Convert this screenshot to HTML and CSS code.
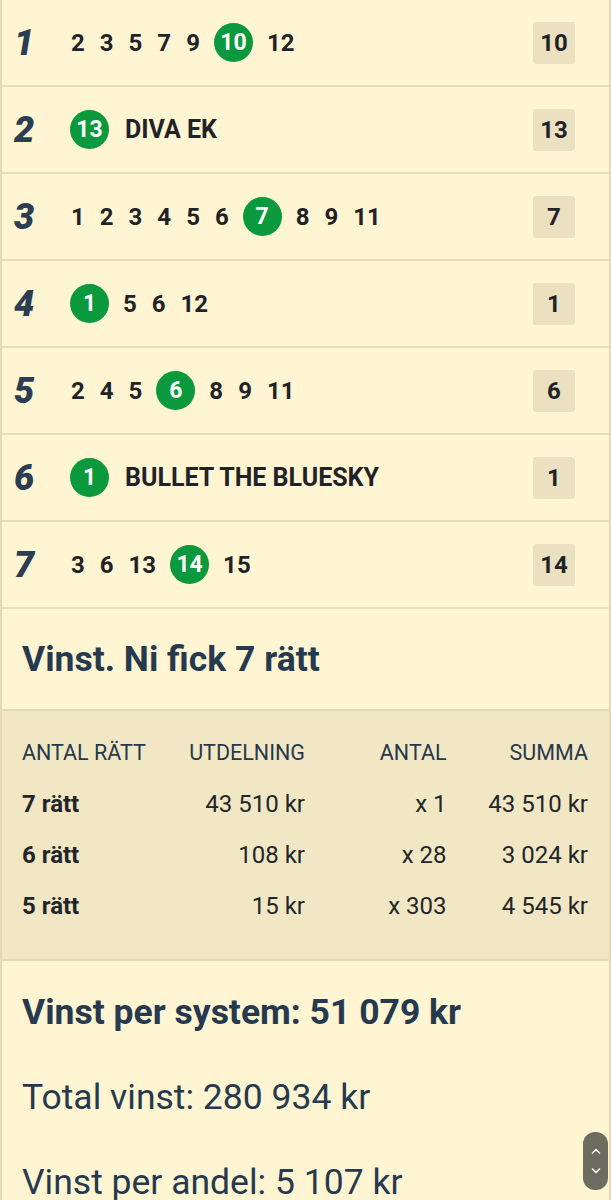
FILE: index.html
```html
<!DOCTYPE html>
<html lang="sv">
<head>
<meta charset="utf-8">
<link rel="stylesheet" href="styles.css">
</head>
<body>
<div class="panel">
  <div class="leg">
    <div class="leg-no">1</div>
    <div class="picks"><span>2</span><span>3</span><span>5</span><span>7</span><span>9</span><span class="win">10</span><span>12</span></div>
    <div class="res">10</div>
  </div>
  <div class="leg">
    <div class="leg-no">2</div>
    <div class="picks"><span class="win">13</span><span class="name">DIVA EK</span></div>
    <div class="res">13</div>
  </div>
  <div class="leg">
    <div class="leg-no">3</div>
    <div class="picks"><span>1</span><span>2</span><span>3</span><span>4</span><span>5</span><span>6</span><span class="win">7</span><span>8</span><span>9</span><span>11</span></div>
    <div class="res">7</div>
  </div>
  <div class="leg">
    <div class="leg-no">4</div>
    <div class="picks"><span class="win">1</span><span>5</span><span>6</span><span>12</span></div>
    <div class="res">1</div>
  </div>
  <div class="leg">
    <div class="leg-no">5</div>
    <div class="picks"><span>2</span><span>4</span><span>5</span><span class="win">6</span><span>8</span><span>9</span><span>11</span></div>
    <div class="res">6</div>
  </div>
  <div class="leg">
    <div class="leg-no">6</div>
    <div class="picks"><span class="win">1</span><span class="name">BULLET THE BLUESKY</span></div>
    <div class="res">1</div>
  </div>
  <div class="leg">
    <div class="leg-no">7</div>
    <div class="picks"><span>3</span><span>6</span><span>13</span><span class="win">14</span><span>15</span></div>
    <div class="res">14</div>
  </div>

  <div class="result-head">Vinst. Ni fick 7 rätt</div>

  <div class="payout">
    <div class="th left">ANTAL RÄTT</div>
    <div class="th">UTDELNING</div>
    <div class="th">ANTAL</div>
    <div class="th">SUMMA</div>

    <div class="td left strong">7 rätt</div>
    <div class="td">43 510 kr</div>
    <div class="td">x 1</div>
    <div class="td">43 510 kr</div>

    <div class="td left strong">6 rätt</div>
    <div class="td">108 kr</div>
    <div class="td">x 28</div>
    <div class="td">3 024 kr</div>

    <div class="td left strong">5 rätt</div>
    <div class="td">15 kr</div>
    <div class="td">x 303</div>
    <div class="td">4 545 kr</div>
  </div>

  <div class="totals">
    <p class="bold">Vinst per system: 51 079 kr</p>
    <p>Total vinst: 280 934 kr</p>
    <p>Vinst per andel: 5 107 kr</p>
  </div>
</div>

<div class="scroller">
  <svg width="12" height="8" viewBox="0 0 12 8"><path d="M2.5 6 L6 2.5 L9.5 6" fill="none" stroke="#fff" stroke-width="1.5" stroke-linecap="round" stroke-linejoin="round"/></svg>
  <svg width="12" height="8" viewBox="0 0 12 8"><path d="M2.5 2 L6 5.5 L9.5 2" fill="none" stroke="#fff" stroke-width="1.5" stroke-linecap="round" stroke-linejoin="round"/></svg>
</div>
</body>
</html>
```

FILE: styles.css
```css
* { box-sizing: border-box; }

html, body {
  margin: 0;
  padding: 0;
  background: #fff5d2;
}

body {
  font-family: Roboto, "Liberation Sans", Arial, sans-serif;
  color: #263a4f;
  overflow: hidden;
}

.panel {
  border-left: 2px solid #e4d9b4;
  border-right: 2px solid #e4d9b4;
  min-height: 1200px;
}

.leg {
  display: flex;
  align-items: center;
  height: 87px;
  border-bottom: 2px solid #e6dcb7;
  padding: 0 34px 0 12px;
}

.leg-no {
  width: 57px;
  flex: none;
  font-family: Roboto, "DejaVu Sans", sans-serif;
  font-weight: 900;
  font-style: italic;
  font-size: 36px;
  color: #2b3d52;
  line-height: 1;
}

.picks {
  display: flex;
  align-items: center;
  gap: 15px;
  font-weight: 700;
  font-size: 24px;
  color: #1f2328;
}

.picks .win {
  width: 39px;
  height: 39px;
  border-radius: 50%;
  background: #0a9a3d;
  color: #fff;
  display: flex;
  align-items: center;
  justify-content: center;
  margin: 0 -1px;
  font-size: 23px;
}

.picks .name {
  font-size: 25px;
  margin-left: 2px;
}

.res {
  margin-left: auto;
  width: 42px;
  height: 42px;
  background: #ebe1c0;
  border-radius: 3px;
  display: flex;
  align-items: center;
  justify-content: center;
  font-weight: 700;
  font-size: 24px;
  color: #1f2328;
}

.result-head {
  height: 102px;
  border-bottom: 2px solid #e4d9b4;
  padding: 30px 0 0 20px;
  font-weight: 700;
  font-size: 35.5px;
  line-height: 40px;
  color: #263a4f;
}

.payout {
  background: #f2e7c5;
  border-bottom: 2px solid #e4d9b4;
  display: grid;
  grid-template-columns: 1fr 1fr 1fr 1fr;
  grid-auto-rows: 51px;
  padding: 16px 21px 28px 20px;
  font-size: 24px;
}

.th, .td {
  display: flex;
  align-items: center;
  justify-content: flex-end;
  white-space: nowrap;
}

.th {
  color: #26384c;
  font-size: 21.5px;
}

.td {
  color: #222629;
}

.left {
  justify-content: flex-start;
}

.strong {
  font-weight: 700;
}

.totals {
  padding: 31px 0 0 20px;
}

.totals p {
  margin: 0 0 45px 0;
  font-size: 35.5px;
  line-height: 40px;
  color: #263a4f;
}

.totals p.bold {
  font-weight: 700;
}

.scroller {
  position: fixed;
  right: 3px;
  top: 1132px;
  width: 25px;
  height: 58px;
  border-radius: 12px;
  background: #6e6b60;
  display: flex;
  flex-direction: column;
  align-items: center;
  justify-content: center;
  gap: 12px;
}

.scroller svg {
  display: block;
}
```
